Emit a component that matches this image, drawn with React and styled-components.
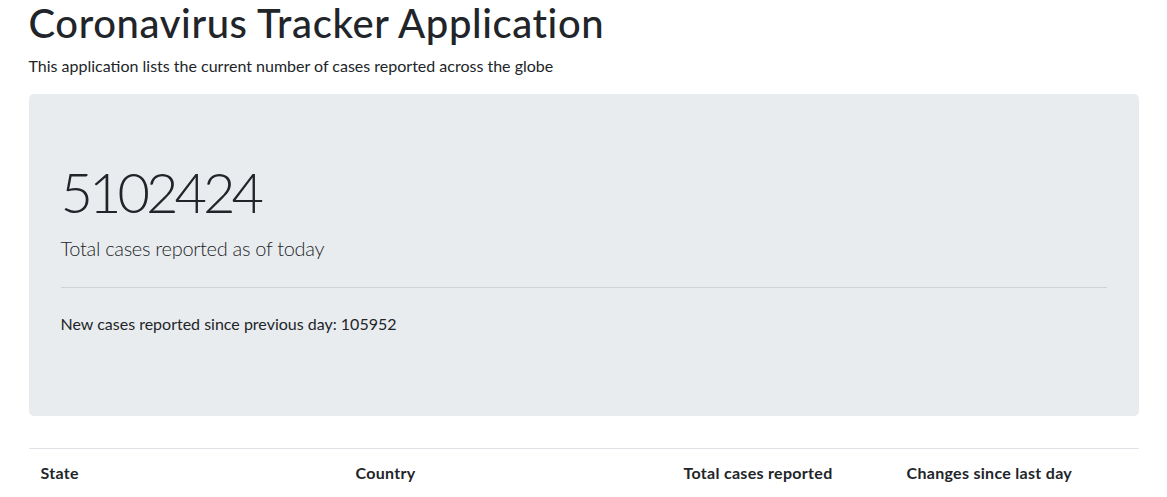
import React from "react";
import styled, { createGlobalStyle } from "styled-components";

const Global = createGlobalStyle`
  *, *::before, *::after { box-sizing: border-box; }
  html, body { margin: 0; padding: 0; background: #fff; }
  body {
    font-family: Lato, "Noto Sans", sans-serif;
    font-size: 16px;
    line-height: 1.5;
    color: #212529;
  }
`;

const Container = styled.div`
  width: 100%;
  max-width: 1140px;
  margin: 0 auto;
  padding: 0 15px;
`;

const Title = styled.h1`
  margin: -1px 0 7px;
  font-size: 40px;
  font-weight: 500;
  line-height: 1.2;
  letter-spacing: 0.6px;
`;

const Subtitle = styled.p`
  margin: 0 0 16px;
`;

const Jumbotron = styled.div`
  background: #e9ecef;
  border-radius: 4.8px;
  padding: 64px 32px;
  margin-bottom: 32px;
`;

const Display = styled.h1`
  margin: 0 0 8px;
  font-size: 56px;
  font-weight: 300;
  line-height: 1.2;
  letter-spacing: -4px;
`;

const Lead = styled.p`
  margin: 0 0 16px;
  font-size: 20px;
  font-weight: 300;
  letter-spacing: -0.3px;
`;

const Rule = styled.hr`
  margin: 24px 0;
  border: 0;
  border-top: 1px solid rgba(0, 0, 0, 0.1);
`;

const Text = styled.p`
  margin: 0 0 16px;
`;

const Table = styled.table`
  width: 100%;
  border-collapse: collapse;
  table-layout: fixed;
`;

const Th = styled.th`
  width: ${(p) => p.$w}px;
  padding: 12px;
  text-align: left;
  font-weight: 700;
  letter-spacing: 0.3px;
  vertical-align: bottom;
  border-top: 1px solid #dee2e6;
`;

export default function App() {
  return (
    <>
      <Global />
      <Container>
        <Title>Coronavirus Tracker Application</Title>
        <Subtitle>This application lists the current number of cases reported across the globe</Subtitle>
        <Jumbotron>
          <Display>5102424</Display>
          <Lead>Total cases reported as of today</Lead>
          <Rule />
          <Text>New cases reported since previous day: 105952</Text>
        </Jumbotron>
        <Table>
          <thead>
            <tr>
              <Th $w={315}>State</Th>
              <Th $w={328}>Country</Th>
              <Th $w={223}>Total cases reported</Th>
              <Th $w={244}>Changes since last day</Th>
            </tr>
          </thead>
        </Table>
      </Container>
    </>
  );
}
